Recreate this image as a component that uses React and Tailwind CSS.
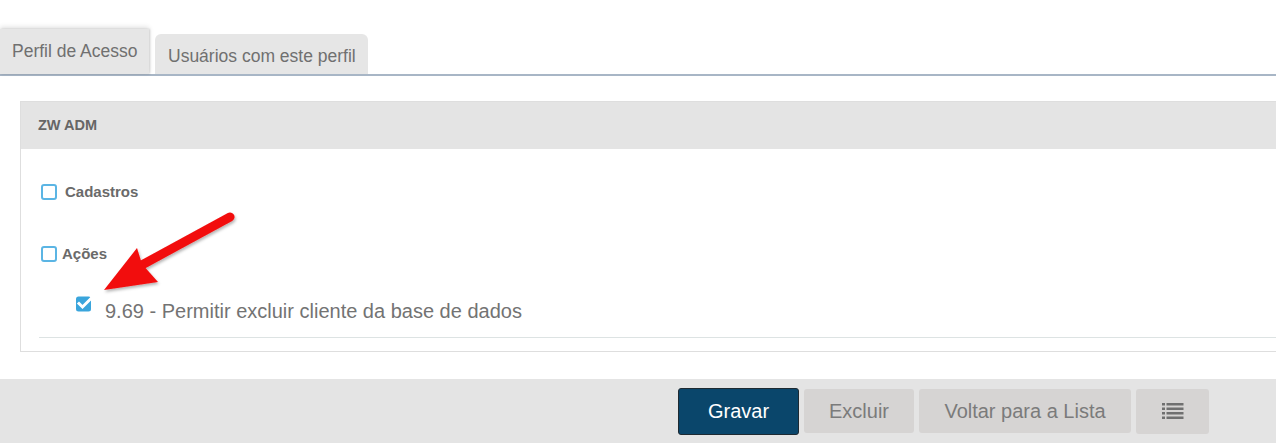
export default function App() {
  return (
    <div className="relative h-[448px] w-[1276px] overflow-hidden bg-white font-['Liberation_Sans',Arial,sans-serif]">
      {/* tabs */}
      <div className="flex items-end border-b-2 border-[#a8b6c6] pt-[29px]">
        <div className="flex h-[45px] w-[149px] items-center bg-[#e6e6e6] pl-[12px] text-[17.5px] text-[#707070] shadow-[0_-2px_5px_rgba(0,0,0,0.12),1px_0_2px_rgba(0,0,0,0.15)]">
          Perfil de Acesso
        </div>
        <div className="ml-[6px] flex h-[40px] w-[213px] items-center rounded-t-[6px] bg-[#e6e6e6] pl-[13px] pt-[4px] text-[17.5px] text-[#707070]">
          Usuários com este perfil
        </div>
      </div>

      {/* panel */}
      <div className="ml-[20px] mt-[25px] border border-r-0 border-[#dedede]">
        <div className="flex h-[47px] items-center bg-[#e4e4e4] pl-[17px] text-[14.5px] font-bold text-[#666]">ZW ADM</div>
        <div className="pl-[20px] pt-[35px]">
          <div className="flex h-[16px] items-center">
            <span className="h-[16px] w-[16px] rounded-[3px] border-2 border-[#5bb5e4] bg-white" />
            <span className="ml-[8px] text-[15px] font-bold text-[#6a6a6a]">Cadastros</span>
          </div>
          <div className="mt-[46px] flex h-[16px] items-center">
            <span className="h-[16px] w-[16px] rounded-[3px] border-2 border-[#5bb5e4] bg-white" />
            <span className="ml-[5px] text-[15px] font-bold text-[#6a6a6a]">Ações</span>
          </div>
          <div className="ml-[35px] mt-[33px] flex items-start">
            <svg viewBox="0 0 18 17" className="h-[17px] w-[18px]">
              <rect x="0" y="1.5" width="15" height="15" rx="2.5" fill="#3aa5dc" />
              <path d="M3 8.5 L6.5 12 L16 2.5" fill="none" stroke="#fff" strokeWidth="3" strokeLinecap="square" />
            </svg>
            <span className="ml-[11px] mt-[5px] text-[20px] leading-[23px] text-[#737373]">9.69 - Permitir excluir cliente da base de dados</span>
          </div>
          <div className="ml-[-2px] mt-[14px] h-px bg-[#dde3e3]" />
          <div className="h-[13px]" />
        </div>
      </div>

      {/* footer */}
      <div className="mt-[27px] flex h-[64px] items-center justify-end bg-[#e4e4e4] pr-[67px]">
        <button className="h-[47px] w-[121px] rounded-[3px] border border-[#1e2a32] bg-[#0a466b] text-[20px] text-white">Gravar</button>
        <button className="ml-[5px] h-[44px] w-[110px] rounded-[3px] bg-[#d6d4d3] text-[20px] text-[#7b7b7b]">Excluir</button>
        <button className="ml-[5px] h-[44px] w-[212px] rounded-[3px] bg-[#d6d4d3] text-[20px] text-[#7b7b7b]">Voltar para a Lista</button>
        <button className="ml-[5px] flex h-[45px] w-[73px] items-center justify-center rounded-[3px] bg-[#d6d4d3]">
          <svg viewBox="0 0 22 16" className="h-[16px] w-[22px]" fill="#707070">
            <rect x="0" y="0" width="3" height="2.5" />
            <rect x="4.5" y="0" width="17" height="2.5" />
            <rect x="0" y="4.5" width="3" height="2.5" />
            <rect x="4.5" y="4.5" width="17" height="2.5" />
            <rect x="0" y="9" width="3" height="2.5" />
            <rect x="4.5" y="9" width="17" height="2.5" />
            <rect x="0" y="13.5" width="3" height="2.5" />
            <rect x="4.5" y="13.5" width="17" height="2.5" />
          </svg>
        </button>
      </div>

      {/* annotation arrow */}
      <svg className="pointer-events-none absolute left-0 top-0" width="300" height="320" viewBox="0 0 300 320">
        <defs>
          <filter id="sh" x="-20%" y="-20%" width="140%" height="140%">
            <feDropShadow dx="1" dy="2" stdDeviation="1.5" floodColor="#000" floodOpacity="0.3" />
          </filter>
        </defs>
        <g filter="url(#sh)">
          <path d="M230 217 L140 266" stroke="#f20d0d" strokeWidth="9" strokeLinecap="round" fill="none" />
          <path d="M104 290 L137 248 L142 264 L158 282 Z" fill="#f20d0d" />
        </g>
      </svg>
    </div>
  );
}
